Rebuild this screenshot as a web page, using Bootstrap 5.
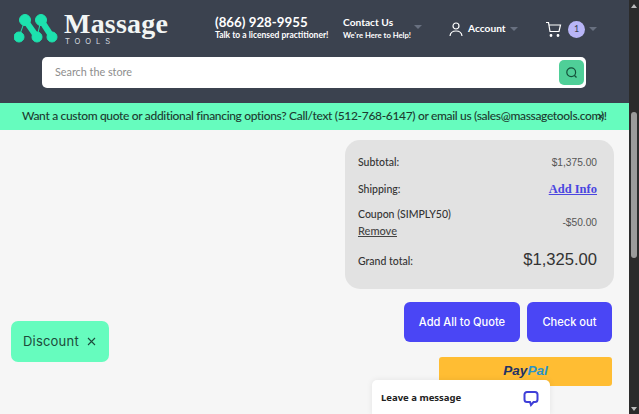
<!DOCTYPE html>
<html lang="en"><head><meta charset="utf-8"><title>Massage Tools</title>
<link href="https://cdn.jsdelivr.net/npm/bootstrap@5.3.0/dist/css/bootstrap.min.css" rel="stylesheet">
<style>
html,body{height:414px;overflow:hidden}
body{background:#f6f6f6;font-family:"Lato","Noto Sans",sans-serif;color:#333}
.shell{height:414px;position:relative;overflow:hidden}
.pagecol{width:629px}
.bar{width:10px;background:#2b2b2b;position:relative}
.thumb{position:absolute;left:2px;top:112px;width:6px;height:146px;background:#9b9b9b;border-radius:3px}
.arr{position:absolute;left:2px;width:0;height:0;border-left:3px solid transparent;border-right:3px solid transparent}
.arr-up{top:4px;border-bottom:4px solid #bbb}
.arr-dn{bottom:3px;border-top:4px solid #bbb}
.hdr{background:#3b424f;height:103px;color:#fff;padding:12px 0 0 14px}
.toprow{height:34px}
.brand{width:201px}
.logoic{margin-right:6px}
.brandname{font-family:"Liberation Serif",serif;font-weight:700;font-size:28px;line-height:24px;letter-spacing:.2px;color:#f2f5f4}
.brandsub{font-family:"Inter",sans-serif;font-size:7.6px;letter-spacing:4.9px;line-height:9px;margin-top:1px;color:#d8dce0;padding-left:1px}
.ph{width:128px;margin-bottom:3px}
.ph1{font-size:13.3px;line-height:15px;font-weight:700}
.ph2{font-size:8.5px;line-height:11px;font-weight:700;white-space:nowrap}
.ct{width:71px;margin-bottom:3px}
.ct1{font-size:10.2px;line-height:15px;font-weight:700}
.ct2{font-size:7.7px;line-height:11px;font-weight:700;white-space:nowrap}
.caret{width:0;height:0;border-left:4px solid transparent;border-right:4px solid transparent;border-top:4px solid #687080;flex-shrink:0}
.caret1{margin-right:27px;margin-top:-4px}
.acct{font-size:10.2px;font-weight:700;width:42px;margin-left:5px}
.caret2{margin-right:27px}
.cartnum{width:17px;height:17px;border-radius:50%;background:#b8b5f7;color:#3b424f;font-size:9px;margin-left:6px;flex-shrink:0}
.srch{width:544px;height:31px;margin:11px 0 0 28px;background:#fff;border-radius:5px;padding:0 2px 0 13px}
.srchtxt{color:#8d8d8d;font-size:10.8px}
.srchbtn{width:25px;height:25px;background:#4fcf98;border-radius:5px}
.promo{background:#66fcbe;height:27px;color:#1d3b30;font-size:12px;font-weight:500;padding-left:22px;position:relative;white-space:nowrap;line-height:26px;letter-spacing:-.33px}
.promox{position:absolute;left:597px;top:0;font-size:13px}
.sumcard{width:269px;height:149px;background:#e2e2e2;border-radius:15px;margin:10px 15px 0 auto;padding:9px 17px 0 13px;font-size:10.5px;font-weight:500;color:#333}
.rw{height:27px}
.couponrow{height:39px}
.grandrow{height:26px;margin-top:7px}
.val{font-family:"Liberation Sans",sans-serif;font-size:10.2px;color:#555;font-weight:400}
.addinfo{font-family:"Liberation Serif",serif;font-weight:700;font-size:12.5px;color:#4a46e0;text-decoration:underline}
.rm{color:#444;text-decoration:underline;display:block;margin-top:3px;line-height:13px;font-size:11px}
.cp{line-height:13px;display:block}
.grand{font-family:"Liberation Sans",sans-serif;font-size:16.6px;color:#333;font-weight:400;margin-top:-4px}
.actrow{margin:13px 17px 0 0;gap:7px}
.actbtn{height:40px;background:#4a46f5;color:#fff;border:0;border-radius:6px;font-family:"Inter",sans-serif;font-size:11.1px;font-weight:500;padding:0}
.w1{width:116px}.w2{width:85px}
.pp{width:173px;height:29px;background:#ffbd33;border-radius:3px;margin:15px 17px 0 auto;font-family:"Liberation Sans",sans-serif;font-weight:700;font-style:italic;font-size:13.5px}
.ppa{color:#1f3264}.ppb{color:#2a93c8}
.disc{position:absolute;left:11px;top:321px;width:98px;height:41px;background:#66fcbe;border-radius:7px;color:#1d4a3b;font-family:"Inter",sans-serif;font-size:13px;padding-left:12px;letter-spacing:.2px}
.discx{margin-left:8px}
.chat{position:absolute;left:372px;top:380px;width:178px;height:34px;background:#fff;border-radius:5px 5px 0 0;padding:2px 11px 0 9px;color:#222;font-size:9.5px;font-weight:700;font-family:"Noto Sans",sans-serif;box-shadow:0 0 6px rgba(0,0,0,.08)}
</style></head><body>
<div class="shell d-flex">
<div class="pagecol">
<header class="hdr">
<div class="toprow d-flex align-items-center">
<div class="brand d-flex align-items-center">
<svg width="44" height="32" viewBox="0 0 44 32" class="logoic flex-shrink-0"><g fill="#1de2ae" stroke="#1de2ae"><path d="M11 7 L23 24" stroke-width="6"/><path d="M27 7 L38 24" stroke-width="6"/><path d="M5 24 L11 7" stroke-width="1"/><path d="M23 24 L27 7" stroke-width="1"/><circle cx="11" cy="7" r="5.5"/><circle cx="27" cy="7" r="5.5"/><circle cx="5" cy="24" r="5"/><circle cx="23" cy="24" r="5"/><circle cx="38" cy="24" r="5"/></g></svg>
<div><div class="brandname">Massage</div><div class="brandsub">TOOLS</div></div>
</div>
<div class="ph"><div class="ph1">(866) 928-9955</div><div class="ph2">Talk to a licensed practitioner!</div></div>
<div class="ct"><div class="ct1">Contact Us</div><div class="ct2">We're Here to Help!</div></div>
<span class="caret caret1"></span>
<svg width="14" height="15" viewBox="0 0 14 15" fill="none" stroke="#fff" stroke-width="1.2" class="flex-shrink-0"><circle cx="7" cy="4" r="3"/><path d="M1 14c.4-3.4 3-5 6-5s5.600 1.600 6 5"/></svg>
<span class="acct">Account</span>
<span class="caret caret2"></span>
<svg width="17" height="17" viewBox="0 0 17 17" fill="none" stroke="#fff" stroke-width="1.2" class="flex-shrink-0"><path d="M1 1.500h2.500l1.500 9h9l1.500-6.500H4"/><circle cx="6" cy="14.500" r=".8" fill="#fff"/><circle cx="13" cy="14.500" r=".8" fill="#fff"/></svg>
<span class="cartnum d-flex align-items-center justify-content-center">1</span>
<span class="caret ms-1"></span>
</div>
<div class="srch d-flex align-items-center justify-content-between">
<span class="srchtxt">Search the store</span>
<span class="srchbtn d-flex align-items-center justify-content-center"><svg width="13" height="13" viewBox="0 0 13 13" fill="none" stroke="#14503a" stroke-width="1.200"><circle cx="6.200" cy="6.200" r="4.400"/><path d="M9.500 9.500l2 2"/></svg></span>
</div>
</header>
<div class="promo">Want a custom quote or additional financing options? Call/text (512-768-6147) or email us (sales@massagetools.com)!<span class="promox">×</span></div>
<div class="sumcard">
<div class="rw d-flex justify-content-between align-items-center"><span>Subtotal:</span><span class="val">$1,375.00</span></div>
<div class="rw d-flex justify-content-between align-items-center"><span>Shipping:</span><a class="addinfo">Add Info</a></div>
<div class="d-flex justify-content-between align-items-center couponrow"><span class="cp">Coupon (SIMPLY50)<span class="rm">Remove</span></span><span class="val">-$50.00</span></div>
<div class="d-flex justify-content-between align-items-center grandrow"><span>Grand total:</span><span class="grand">$1,325.00</span></div>
</div>
<div class="d-flex justify-content-end actrow">
<button class="btn actbtn w1">Add All to Quote</button>
<button class="btn actbtn w2">Check out</button>
</div>
<div class="pp d-flex align-items-center justify-content-center"><span class="ppa">Pay</span><span class="ppb">Pal</span></div>
</div>
<div class="bar flex-shrink-0"><span class="arr arr-up"></span><span class="thumb"></span><span class="arr arr-dn"></span></div>
<div class="disc d-flex align-items-center">Discount<svg width="9" height="9" viewBox="0 0 9 9" stroke="#1d4a3b" stroke-width="1.100" class="discx"><path d="M1 1l7 7M8 1l-7 7"/></svg></div>
<div class="chat d-flex align-items-center justify-content-between">Leave a message
<svg width="16" height="17" viewBox="0 0 16 17" fill="none" stroke="#3f3fd8" stroke-width="2"><path d="M4 2h8a2.500 2.500 0 0 1 2.500 2.500v5A2.500 2.500 0 0 1 12 12h-1.500l-2.500 3-1-3H4a2.500 2.500 0 0 1-2.500-2.500v-5A2.500 2.500 0 0 1 4 2z"/></svg></div>
</div>
</body></html>
